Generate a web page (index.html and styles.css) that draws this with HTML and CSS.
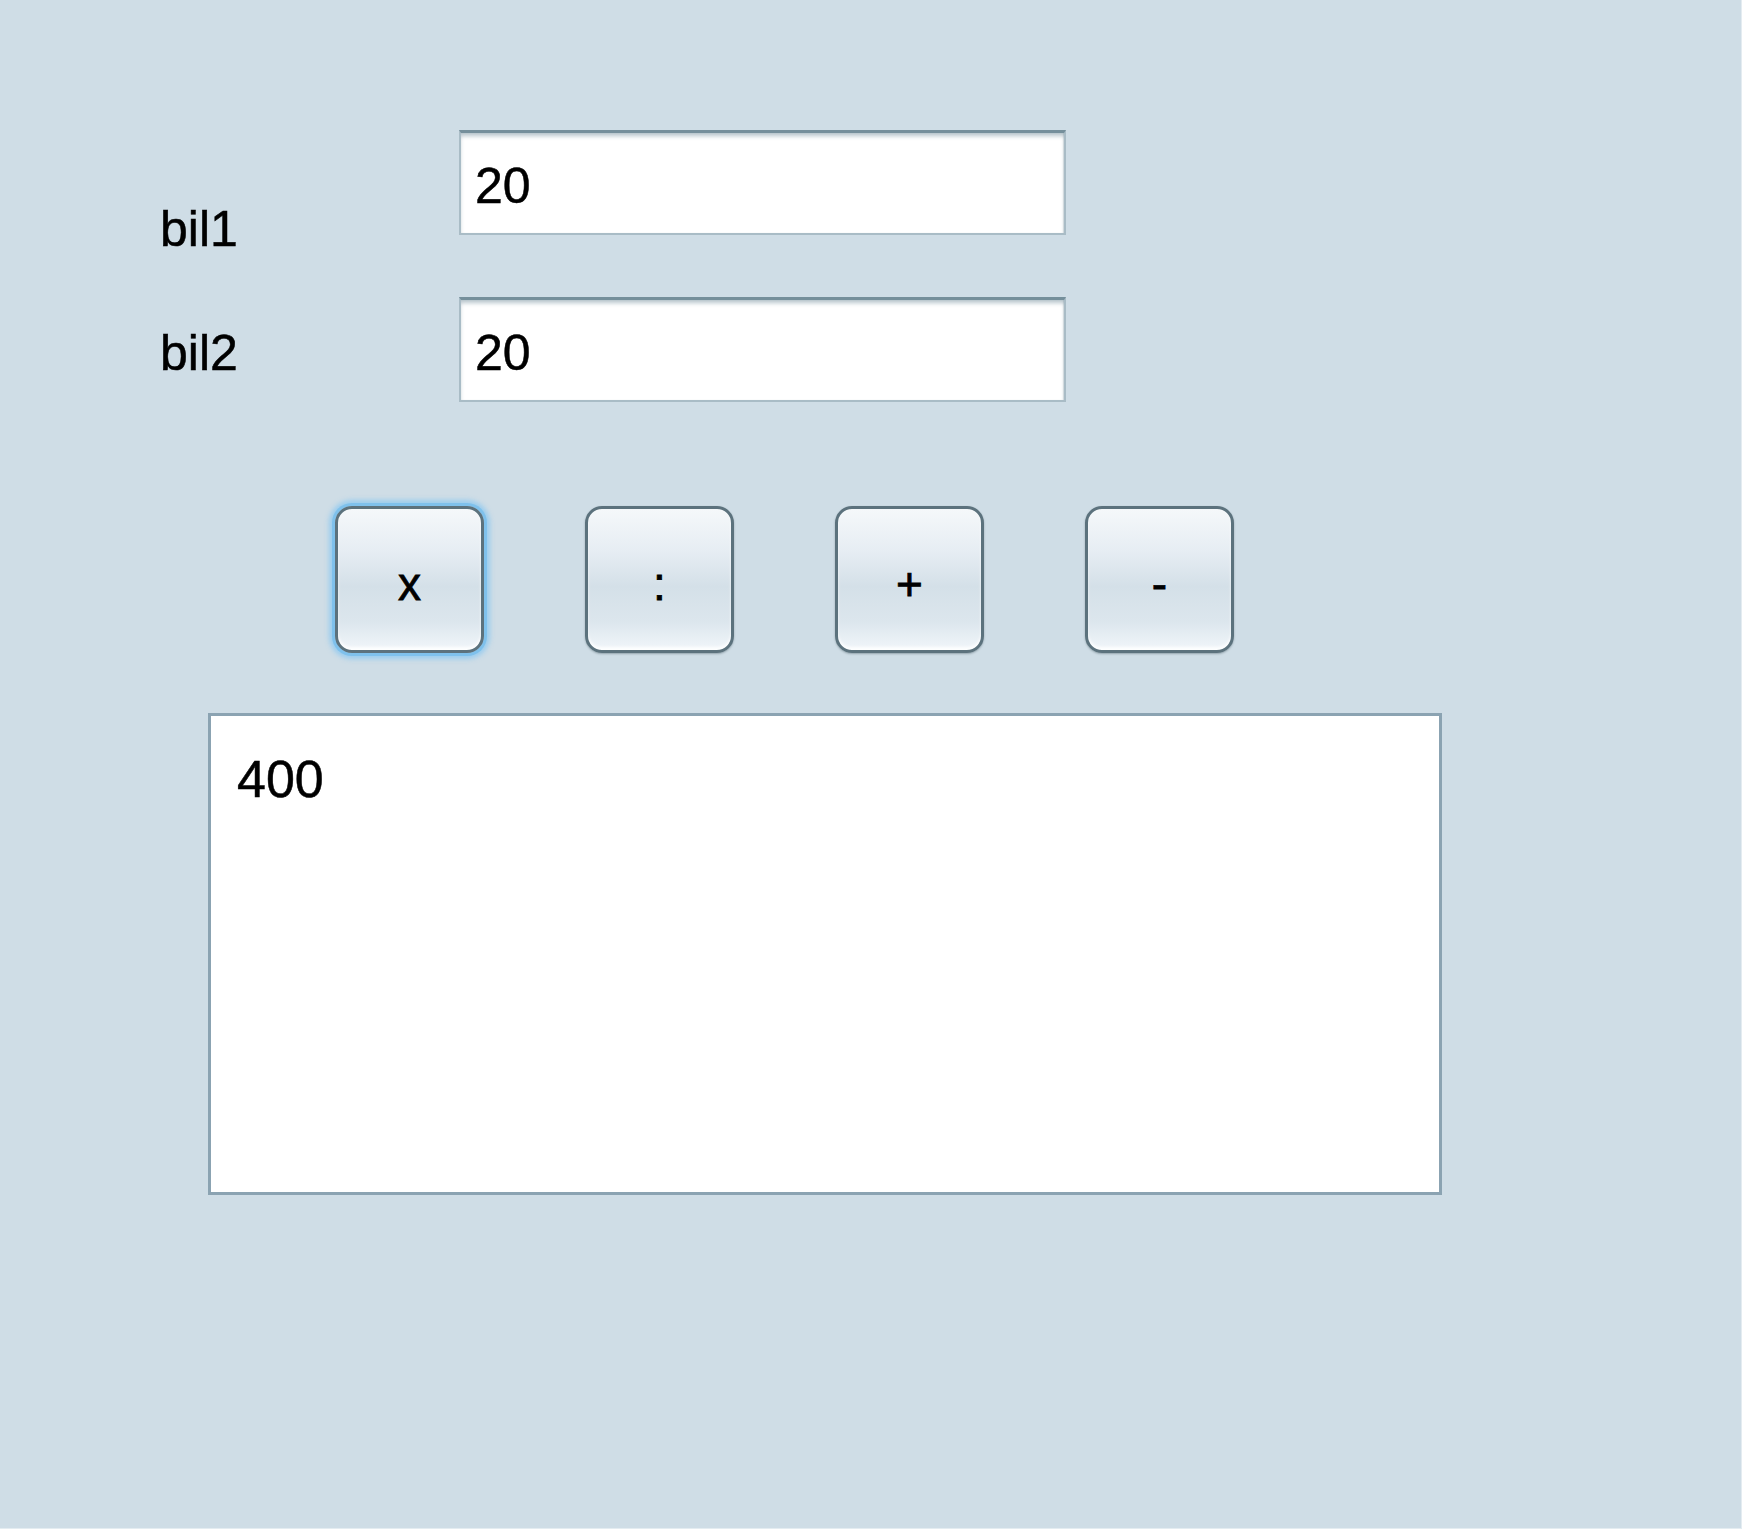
FILE: index.html
```html
<!DOCTYPE html>
<html lang="id">
<head>
<meta charset="utf-8">
<title>Kalkulator</title>
<link rel="stylesheet" href="styles.css">
</head>
<body>
<div class="app">
  <div class="form">
    <div class="row row-1">
      <div class="label label-1">bil1</div>
      <div class="field">20</div>
    </div>
    <div class="row row-2">
      <div class="label label-2">bil2</div>
      <div class="field">20</div>
    </div>
  </div>
  <div class="buttons">
    <button class="btn btn-focus" type="button">x</button>
    <button class="btn" type="button">:</button>
    <button class="btn" type="button">+</button>
    <button class="btn" type="button">-</button>
  </div>
  <div class="output">400</div>
</div>
</body>
</html>
```
FILE: styles.css
```css
html, body {
  margin: 0;
  padding: 0;
  background: #cfdde6;
}

.app {
  box-sizing: border-box;
  width: 1742px;
  height: 1529px;
  padding: 130px 0 0 160px;
  border-right: 1px solid #e4ecf1;
  border-bottom: 1px solid #e4ecf1;
  font-family: "Liberation Sans", Arial, sans-serif;
  color: #000;
  -webkit-text-stroke: 0.5px #000;
}

.form {
  display: flex;
  flex-direction: column;
  gap: 62px;
}

.row {
  display: flex;
  height: 105px;
}

.label {
  width: 299px;
  font-size: 50px;
  line-height: 50px;
}

.label-1 {
  align-self: flex-end;
  margin-bottom: -19px;
}

.label-2 {
  padding-top: 31px;
}

.field {
  box-sizing: border-box;
  width: 607px;
  height: 105px;
  background: #fff;
  border: 2px solid #a9bcc6;
  border-top: 3px solid #758f9b;
  box-shadow: inset 0 4px 4px -1px rgba(95, 125, 140, 0.45), inset -1px 0 1px rgba(95, 125, 140, 0.2);
  padding: 28px 0 0 14px;
  font-size: 50px;
  line-height: 50px;
}

.buttons {
  display: flex;
  gap: 101px;
  margin: 104px 0 0 175px;
}

.btn {
  box-sizing: border-box;
  width: 149px;
  height: 147px;
  padding: 8px 0 0 0;
  border: 3px solid #5c727d;
  border-radius: 17px;
  background: linear-gradient(to bottom, #f5f8fa 0%, #e6edf3 30%, #d4e0e8 55%, #dce6ed 80%, #f1f6fa 100%);
  box-shadow: inset 0 -3px 3px rgba(255, 255, 255, 0.85), 0 1px 2px rgba(60, 80, 90, 0.4);
  font-family: "Liberation Sans", Arial, sans-serif;
  font-size: 46px;
  line-height: 46px;
  color: #000;
  -webkit-text-stroke: 0.8px #000;
}

.btn-focus {
  box-shadow: inset 0 -3px 3px rgba(255, 255, 255, 0.85), 0 0 0 3px #7fc1ec, 0 0 5px 6px rgba(140, 200, 240, 0.8);
}

.output {
  box-sizing: border-box;
  width: 1234px;
  height: 482px;
  margin: 60px 0 0 48px;
  background: #fff;
  border: 3px solid #8ba3b2;
  padding: 37px 0 0 26px;
  font-size: 52px;
  line-height: 52px;
}
```
